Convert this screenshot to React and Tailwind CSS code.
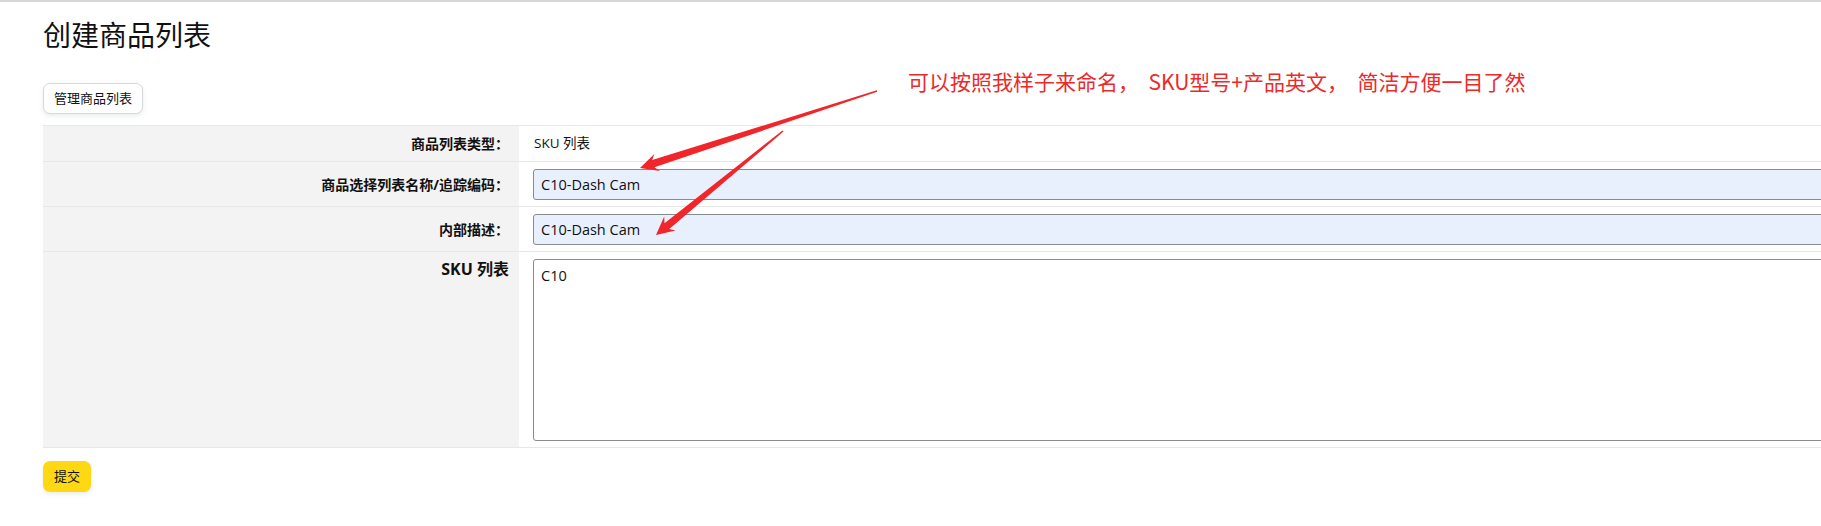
import React from "react";

const font = { fontFamily: '"Open Sans", "Noto Sans CJK SC", sans-serif' };

function arrowPoints(tx, ty, hx, hy, headLen = 18, headW = 9, neckW = 3.8, tailW = 0.8) {
  const dx = hx - tx;
  const dy = hy - ty;
  const len = Math.sqrt(dx * dx + dy * dy);
  const ux = dx / len;
  const uy = dy / len;
  const px = -uy;
  const py = ux;
  const bx = hx - ux * headLen;
  const by = hy - uy * headLen;
  const nx = hx - ux * headLen * 0.78;
  const ny = hy - uy * headLen * 0.78;
  const pts = [
    [tx + px * tailW, ty + py * tailW],
    [nx + px * neckW, ny + py * neckW],
    [bx + px * headW, by + py * headW],
    [hx, hy],
    [bx - px * headW, by - py * headW],
    [nx - px * neckW, ny - py * neckW],
    [tx - px * tailW, ty - py * tailW],
  ];
  return pts.map((p) => p[0].toFixed(1) + "," + p[1].toFixed(1)).join(" ");
}

function Row({ label, children, top }) {
  return (
    <div className="flex border-b border-[#e7e7e7]">
      <div
        className={
          "w-[476px] shrink-0 bg-[#f3f3f3] pr-[10px] text-right font-bold text-[#111] " +
          (top ? "pt-[7px] text-[16px] leading-[20px]" : "flex items-center justify-end text-[14px]")
        }
      >
        {label}
      </div>
      <div className="flex-1 py-[7px] pb-[6px] pl-[14px]">{children}</div>
    </div>
  );
}

export default function App() {
  return (
    <div className="relative h-[526px] w-full overflow-hidden bg-white border-t-2 border-[#d6d6d6]" style={font}>
      <div className="pl-[43px]">
        <h1 className="pt-[13px] text-[28px] font-normal leading-[40px] text-[#111]">创建商品列表</h1>

        <button className="mt-[28px] h-[31px] rounded-[7px] border border-[#d5d9d9] bg-white px-[10px] text-[13px] text-[#111] shadow-[0_2px_4px_rgba(213,217,217,0.5)]">
          管理商品列表
        </button>

        <div className="mt-[11px] w-[1900px] border-t border-[#e7e7e7]">
          <div className="flex h-[36px] border-b border-[#e7e7e7]">
            <div className="flex w-[476px] shrink-0 items-center justify-end bg-[#f3f3f3] pr-[10px] text-[14px] font-bold text-[#111]">
              商品列表类型：
            </div>
            <div className="flex flex-1 items-center pl-[15px] text-[13.5px] text-[#111]">SKU 列表</div>
          </div>

          <Row label="商品选择列表名称/追踪编码：">
            <input
              readOnly
              value="C10-Dash Cam"
              className="h-[31px] w-full rounded-[3px] border border-[#888c8c] bg-[#e8f0fe] px-[7px] text-[14.5px] text-[#111] outline-none"
              style={font}
            />
          </Row>

          <Row label="内部描述：">
            <input
              readOnly
              value="C10-Dash Cam"
              className="h-[31px] w-full rounded-[3px] border border-[#888c8c] bg-[#e8f0fe] px-[7px] text-[14.5px] text-[#111] outline-none"
              style={font}
            />
          </Row>

          <Row label="SKU 列表" top>
            <textarea
              readOnly
              value="C10"
              className="block h-[182px] w-full resize-none rounded-[3px] border border-[#888c8c] bg-white px-[7px] py-[5px] text-[14.5px] text-[#111] outline-none"
              style={font}
            />
          </Row>
        </div>

        <button className="mt-[13px] h-[31px] rounded-[7px] bg-[#ffd814] px-[11px] text-[13px] text-[#111] shadow-[0_2px_4px_rgba(213,217,217,0.5)]">
          提交
        </button>
      </div>

      <div
        className="absolute left-[908px] top-[62px] whitespace-pre text-[21px] leading-[34px] text-[#ec2a2a]"
        style={{ fontFamily: '"Noto Sans CJK SC", sans-serif' }}
      >
        {"可以按照我样子来命名，  SKU型号+产品英文，  简洁方便一目了然"}
      </div>

      <svg className="pointer-events-none absolute left-0 top-0" width="1821" height="526">
        <polygon points={arrowPoints(877, 89, 640, 166)} fill="#f0262a" />
        <polygon points={arrowPoints(783, 129, 656, 233)} fill="#f0262a" />
      </svg>
    </div>
  );
}
